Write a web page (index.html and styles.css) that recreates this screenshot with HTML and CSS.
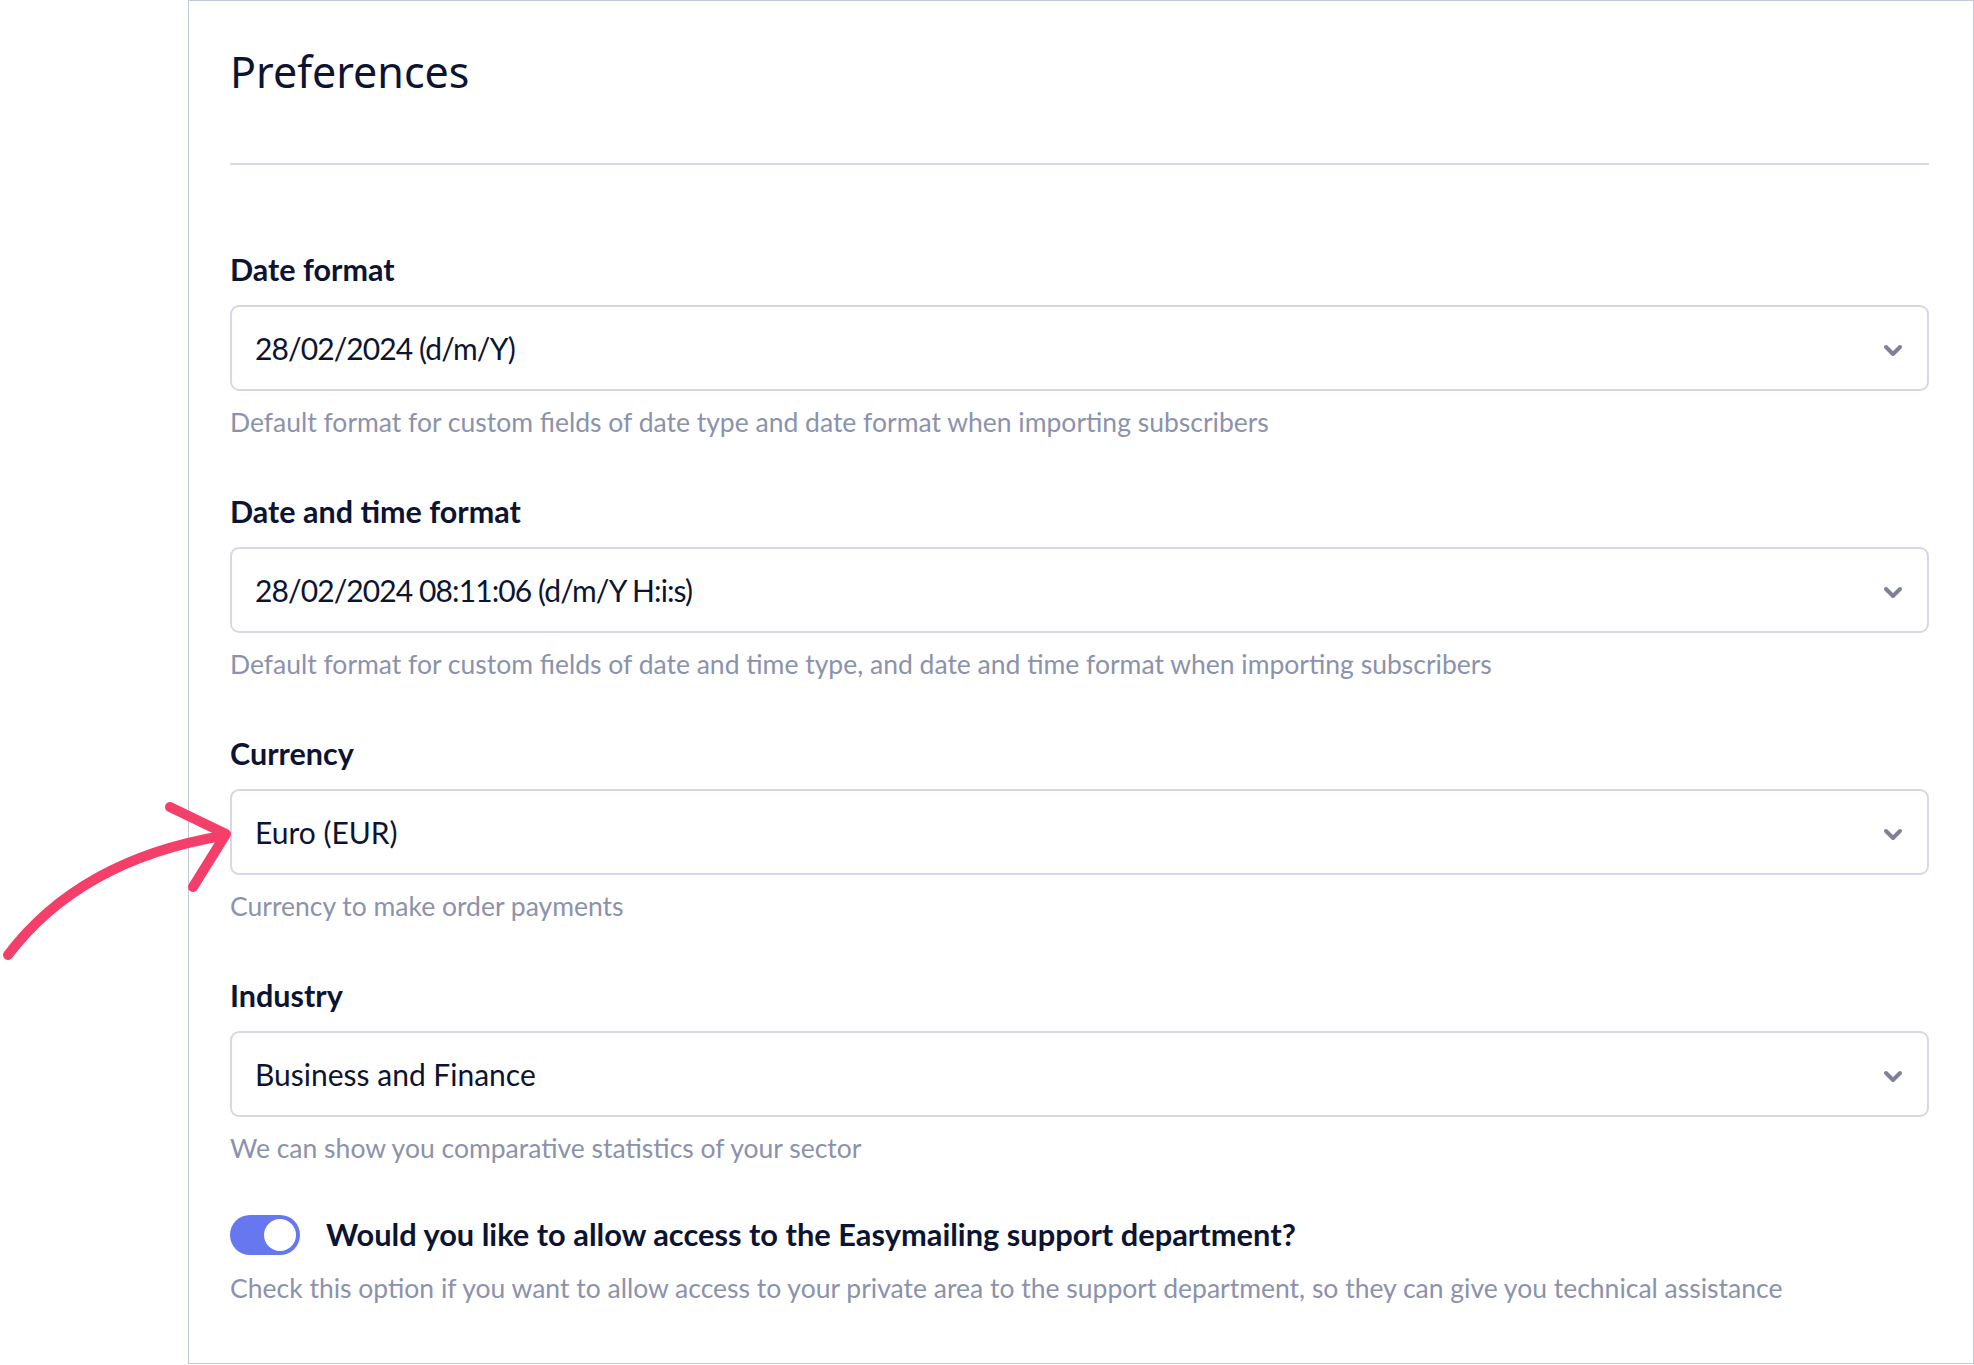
FILE: index.html
```html
<!DOCTYPE html>
<html lang="en">
<head>
    <meta charset="UTF-8">
    <meta name="viewport" content="width=device-width, initial-scale=1.0">
    <title>Preferences</title>
    <link rel="stylesheet" href="styles.css">
</head>
<body>
    <div class="page">
        <!-- pointer arrow -->
        <svg class="pointer" width="240" height="170" viewBox="0 0 240 170">
            <path d="M8 155 Q 80 60 222 36" fill="none" stroke="#f43f6b" stroke-width="10" stroke-linecap="round"/>
            <path d="M170 7 L226 34 L193 87" fill="none" stroke="#f43f6b" stroke-width="10" stroke-linecap="round" stroke-linejoin="round"/>
        </svg>

        <div class="card">
            <h1>Preferences</h1>
            <hr class="divider">

            <div class="field">
                <label>Date format</label>
                <div class="select">
                    <span class="num">28/02/2024 (d/m/Y)</span>
                    <svg class="chevron" width="20" height="14" viewBox="0 0 20 14"><path d="M3 3 L10 10 L17 3" fill="none" stroke="#7b8299" stroke-width="4" stroke-linecap="round" stroke-linejoin="round"/></svg>
                </div>
                <p class="help">Default format for custom fields of date type and date format when importing subscribers</p>
            </div>

            <div class="field">
                <label>Date and time format</label>
                <div class="select">
                    <span class="num">28/02/2024 08:11:06 (d/m/Y H:i:s)</span>
                    <svg class="chevron" width="20" height="14" viewBox="0 0 20 14"><path d="M3 3 L10 10 L17 3" fill="none" stroke="#7b8299" stroke-width="4" stroke-linecap="round" stroke-linejoin="round"/></svg>
                </div>
                <p class="help">Default format for custom fields of date and time type, and date and time format when importing subscribers</p>
            </div>

            <div class="field">
                <label>Currency</label>
                <div class="select">
                    <span>Euro (EUR)</span>
                    <svg class="chevron" width="20" height="14" viewBox="0 0 20 14"><path d="M3 3 L10 10 L17 3" fill="none" stroke="#7b8299" stroke-width="4" stroke-linecap="round" stroke-linejoin="round"/></svg>
                </div>
                <p class="help">Currency to make order payments</p>
            </div>

            <div class="field">
                <label>Industry</label>
                <div class="select">
                    <span>Business and Finance</span>
                    <svg class="chevron" width="20" height="14" viewBox="0 0 20 14"><path d="M3 3 L10 10 L17 3" fill="none" stroke="#7b8299" stroke-width="4" stroke-linecap="round" stroke-linejoin="round"/></svg>
                </div>
                <p class="help">We can show you comparative statistics of your sector</p>
            </div>

            <div class="toggle-row">
                <span class="toggle"><span class="knob"></span></span>
                <span class="toggle-label">Would you like to allow access to the Easymailing support department?</span>
            </div>
            <p class="help toggle-help">Check this option if you want to allow access to your private area to the support department, so they can give you technical assistance</p>
        </div>
    </div>
</body>
</html>
```

FILE: styles.css
```css
/* page */
html, body {
    margin: 0;
    padding: 0;
    background: #fff;
    overflow: hidden;
}
body {
    font-family: "Lato", "Noto Sans", sans-serif;
    color: #0c1431;
}
.page {
    position: relative;
    padding-left: 188px;
}
.pointer {
    position: absolute;
    left: 0;
    top: 800px;
}
.card {
    box-sizing: border-box;
    height: 1364px;
    border: 1px solid #c3c9da;
    padding: 46px 44px 0 41px;
}
h1 {
    margin: 0;
    font-family: "Noto Sans", sans-serif;
    font-weight: 400;
    font-size: 43px;
    line-height: 50px;
    color: #0c1431;
}
.divider {
    margin: 66px 0 0;
    border: none;
    height: 2px;
    background: #d5d8e6;
}
/* fields */
.field {
    display: flex;
    flex-direction: column;
}
.field:first-of-type {
    margin-top: 86px;
}
.field + .field {
    margin-top: 54px;
}
label {
    font-weight: 700;
    font-size: 30.5px;
    line-height: 36px;
}
.select {
    box-sizing: border-box;
    height: 86px;
    margin-top: 18px;
    border: 2px solid #d5d8e6;
    border-radius: 9px;
    padding: 0 24px 0 23px;
    display: flex;
    align-items: center;
    justify-content: space-between;
    font-size: 30px;
}
.select .num {
    letter-spacing: -0.9px;
}
.chevron {
    margin-top: 6px;
}
.help {
    margin: 14px 0 0;
    font-size: 26.5px;
    line-height: 34px;
    color: #8b92ad;
}
/* toggle */
.toggle-row {
    display: flex;
    align-items: center;
    gap: 26px;
    margin-top: 50px;
}
.toggle {
    box-sizing: border-box;
    width: 70px;
    height: 40px;
    border-radius: 20px;
    background: #6677f0;
    padding: 4px;
    display: flex;
    justify-content: flex-end;
}
.knob {
    width: 32px;
    height: 32px;
    border-radius: 50%;
    background: #fff;
}
.toggle-label {
    font-weight: 700;
    font-size: 30.8px;
    line-height: 36px;
}
.toggle-help {
    margin-top: 16px;
}
```
